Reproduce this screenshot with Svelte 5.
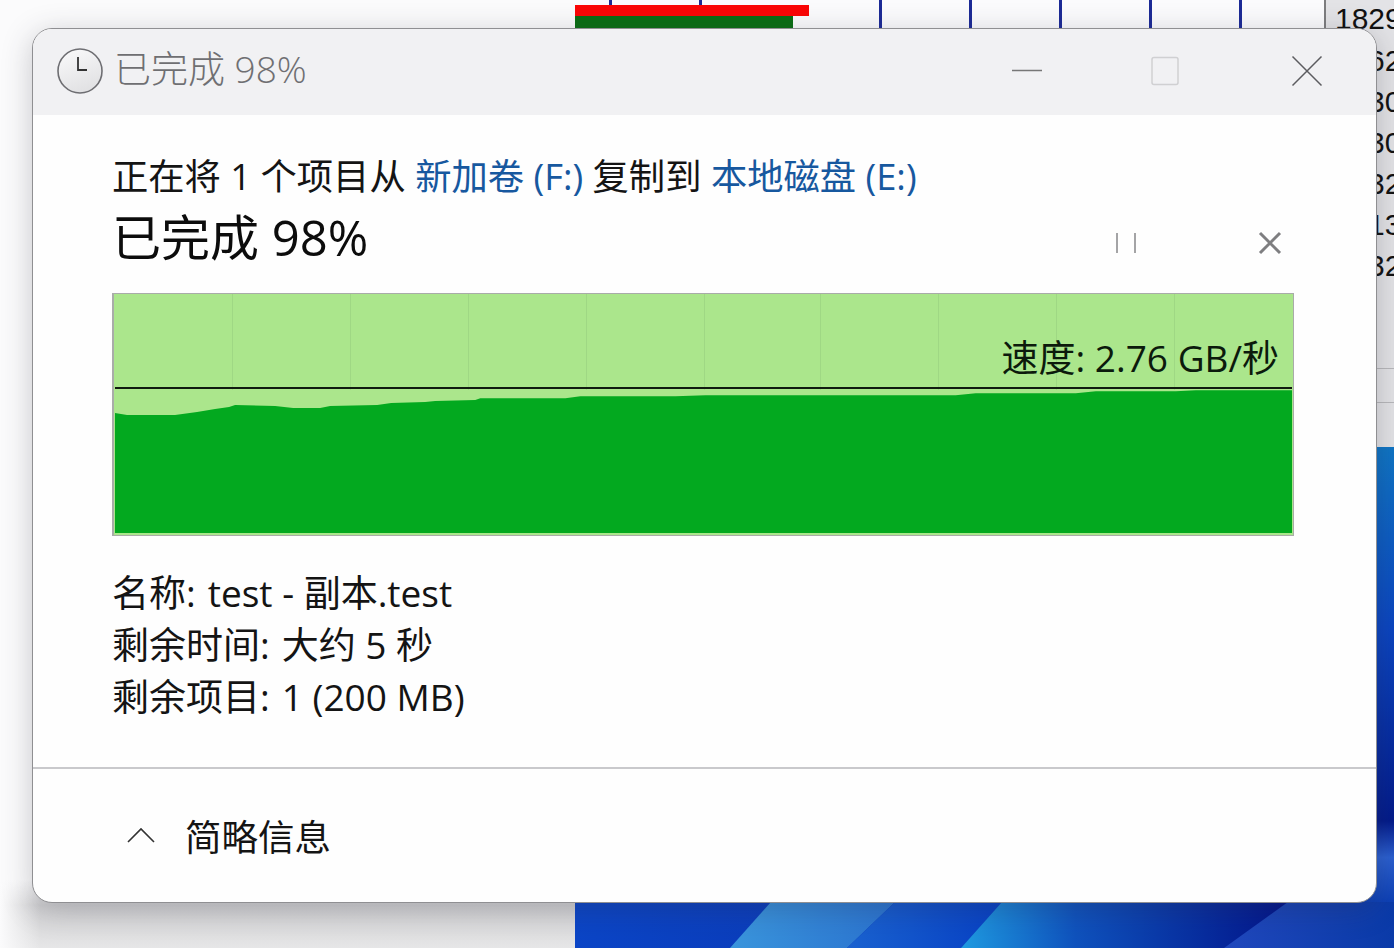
<script lang="ts">
	const gridLines = [233, 351, 469, 587, 705, 821, 939, 1057, 1175];
	const topTicks = [610, 700, 880, 970, 1060, 1150, 1240];
	const clippedCells = ['62', '30', '30', '32', '13', '32'];

	// sampled by eye from the graph, x / y are in the graph's own coordinates
	const curve = [
		[0, 119], [12, 121], [60, 121], [82, 118], [100, 115], [114, 113], [120, 111], [160, 112],
		[178, 114], [205, 114], [215, 112], [262, 111], [276, 109], [310, 108], [320, 107], [360, 106],
		[365, 104], [450, 104], [465, 102], [560, 102], [590, 101], [670, 101], [720, 101], [840, 101],
		[860, 99], [960, 99], [980, 97], [1060, 97], [1080, 96], [1176, 96]
	];
	const areaPath = 'M' + curve.map(([x, y]) => `${x} ${y}`).join('L') + 'L1176 240L0 240Z';
</script>

<div class="desktop">
	<div class="backdrop">
		<div class="sheet">
			{#each topTicks as x}
				<span class="tick" style={`left:${x - 576}px`}></span>
			{/each}
			<span class="bar bar--green"></span>
			<span class="bar bar--red"></span>
			<span class="sheet__rule"></span>
		</div>

		<div class="column">
			<span class="column__first">1829</span>
			<div class="column__cells">
				{#each clippedCells as cell}
					<span>{cell}</span>
				{/each}
			</div>
			<span class="column__rule column__rule--a"></span>
			<span class="column__rule column__rule--b"></span>
		</div>
		<div class="strip"></div>

		<svg class="wallpaper" viewBox="0 0 819 46" preserveAspectRatio="none" aria-hidden="true">
			<defs>
				<linearGradient id="wall-a" x1="0" x2="1" y1="0" y2="0">
					<stop offset="0" stop-color="#0b45c6" />
					<stop offset="0.5" stop-color="#0a34b0" />
					<stop offset="1" stop-color="#021488" />
				</linearGradient>
				<linearGradient id="wall-b" x1="0" x2="1" y1="0" y2="0">
					<stop offset="0" stop-color="#3a95dc" />
					<stop offset="1" stop-color="#2a72cf" />
				</linearGradient>
				<linearGradient id="wall-c" x1="0" x2="1" y1="0" y2="0">
					<stop offset="0" stop-color="#1a62d0" />
					<stop offset="1" stop-color="#0740c4" />
				</linearGradient>
				<linearGradient id="wall-d" x1="0" x2="1" y1="0" y2="0">
					<stop offset="0" stop-color="#1f9ae0" />
					<stop offset="0.35" stop-color="#0f52bd" />
					<stop offset="1" stop-color="#02148a" />
				</linearGradient>
				<linearGradient id="wall-e" x1="0" x2="1" y1="0" y2="0">
					<stop offset="0" stop-color="#2048bd" />
					<stop offset="1" stop-color="#0a3aa8" />
				</linearGradient>
			</defs>
			<rect width="819" height="46" fill="url(#wall-a)" />
			<path d="M155 46L196 0H320L272 46Z" fill="url(#wall-b)" />
			<path d="M272 46L320 0H427L386 46Z" fill="url(#wall-c)" />
			<path d="M386 46L427 0H713L649 46Z" fill="url(#wall-d)" />
			<path d="M649 46L713 0H819V46Z" fill="url(#wall-e)" />
		</svg>
	</div>

	<section class="dialog">
		<header class="titlebar">
			<div class="titlebar__left">
				<svg class="clock" width="48" height="48" viewBox="0 0 48 48" aria-hidden="true">
					<defs>
						<linearGradient id="clock-face" x1="0" x2="0.4" y1="0" y2="1">
							<stop offset="0" stop-color="#fbfbfc" />
							<stop offset="1" stop-color="#e2e2e4" />
						</linearGradient>
					</defs>
					<circle cx="24" cy="24" r="22" fill="url(#clock-face)" stroke="#6e6e72" stroke-width="1.6" />
					<path d="M22 10V23H31" fill="none" stroke="#333" stroke-width="1.8" />
				</svg>
				<span class="titlebar__text">已完成 98%</span>
			</div>
			<div class="winctl">
				<svg width="32" height="32" viewBox="0 0 32 32" aria-hidden="true"><path d="M1 15.5H31" stroke="#777" stroke-width="1.4" /></svg>
				<svg width="32" height="32" viewBox="0 0 32 32" aria-hidden="true"><rect x="3" y="2.5" width="26" height="27" rx="2" fill="none" stroke="#d0d0d2" stroke-width="1.5" /></svg>
				<svg class="winctl__close" width="32" height="32" viewBox="0 0 32 32" aria-hidden="true"><path d="M1.5 1.5L30.5 30.5M30.5 1.5L1.5 30.5" stroke="#5c5c5f" stroke-width="1.5" /></svg>
			</div>
		</header>

		<div class="body">
			<p class="route">正在将 1 个项目从 <span class="link">新加卷 (F:)</span> 复制到 <span class="link">本地磁盘 (E:)</span></p>
			<div class="status">
				<h1>已完成 98%</h1>
				<div class="actions">
					<svg width="22" height="22" viewBox="0 0 22 22" aria-hidden="true"><path d="M2 1V21M20 1V21" stroke="#a4a4a6" stroke-width="2" /></svg>
					<svg width="24" height="24" viewBox="0 0 24 24" aria-hidden="true"><path d="M2 2L22 22M22 2L2 22" stroke="#7e7e80" stroke-width="3" /></svg>
				</div>
			</div>

			<div class="graph">
				{#each gridLines as x}
					<span class="graph__grid" style={`left:${x - 115}px`}></span>
				{/each}
				<svg class="graph__area" viewBox="0 0 1176 240" preserveAspectRatio="none" aria-hidden="true">
					<path d={areaPath} fill="#03a91f" />
				</svg>
				<span class="graph__line"></span>
				<span class="graph__speed">速度: 2.76 GB/秒</span>
			</div>

			<ul class="details">
				<li><span class="details__label">名称:</span>test - 副本.test</li>
				<li><span class="details__label">剩余时间:</span>大约 5 秒</li>
				<li><span class="details__label">剩余项目:</span>1 (200 MB)</li>
			</ul>
		</div>

		<footer class="footer">
			<svg width="30" height="18" viewBox="0 0 30 18" aria-hidden="true"><path d="M2 16L15 3L28 16" fill="none" stroke="#333" stroke-width="1.6" /></svg>
			<span>简略信息</span>
		</footer>
	</section>
</div>

<style>
	:global(body) {
		margin: 0;
		background: #fff;
	}

	.desktop {
		position: relative;
		width: 1394px;
		height: 948px;
		overflow: hidden;
		padding: 28px 17px 45px 32px;
		box-sizing: border-box;
		font-family: "Open Sans", "Noto Sans CJK SC", sans-serif;
		color: #141414;
	}

	.backdrop {
		position: absolute;
		inset: 0;
		background:
			linear-gradient(90deg, #fbfbfc 0, rgba(251, 251, 252, 0) 40px),
			linear-gradient(180deg, #fbfbfc 880px, #d0d0d2 905px, #e6e6e7 948px);
	}

	.sheet {
		position: absolute;
		left: 575px;
		top: 0;
		width: 751px;
		height: 28px;
		background: #fbfbfd;
	}

	.tick {
		position: absolute;
		top: 0;
		bottom: 0;
		width: 3px;
		background: #1c2a96;
	}

	.bar {
		position: absolute;
		left: 0;
	}

	.bar--green {
		top: 16px;
		width: 218px;
		height: 12px;
		background: #0a6e14;
	}

	.bar--red {
		top: 5px;
		width: 234px;
		height: 11px;
		background: #fb0606;
	}

	.sheet__rule {
		position: absolute;
		right: 0;
		top: 0;
		bottom: 0;
		width: 2px;
		background: #7d7d7f;
	}

	.column {
		position: absolute;
		left: 1326px;
		top: 0;
		right: 0;
		height: 447px;
		overflow: hidden;
		background: #e3e3e6;
		font-family: "Liberation Sans", sans-serif;
		font-size: 30px;
		color: #111;
	}

	.column__first {
		position: absolute;
		left: 9px;
		top: 0;
		line-height: 37px;
	}

	.column__cells {
		position: absolute;
		left: 42px;
		top: 40px;
		display: flex;
		flex-direction: column;
		line-height: 41px;
	}

	.column__rule {
		position: absolute;
		left: 0;
		right: 0;
		height: 1px;
		background: #b8b8bb;
	}

	.column__rule--a {
		top: 368px;
	}

	.column__rule--b {
		top: 402px;
	}

	.strip {
		position: absolute;
		left: 1326px;
		top: 447px;
		right: 0;
		height: 456px;
		background: linear-gradient(180deg, #0e74c4 0, #0a44c0 40%, #021a8a 82%, #2a5fd0 90%, #0c3fb4 100%);
	}

	.wallpaper {
		position: absolute;
		left: 575px;
		top: 902px;
		width: 819px;
		height: 46px;
	}

	.dialog {
		position: relative;
		display: flex;
		flex-direction: column;
		height: 100%;
		box-sizing: border-box;
		border-radius: 20px;
		background: #fefefe;
		border: 1.5px solid #8f8f92;
		box-shadow: 0 6px 30px rgba(50, 50, 60, 0.26);
		overflow: hidden;
	}

	.titlebar {
		display: flex;
		align-items: center;
		justify-content: space-between;
		height: 86px;
		flex: none;
		box-sizing: border-box;
		padding: 0 53px 3px 23px;
		background: #f1f1f3;
	}

	.titlebar__left {
		display: flex;
		align-items: center;
		gap: 10px;
	}

	.titlebar__text {
		font-size: 37px;
		font-weight: 300;
		line-height: 48px;
		margin-top: -4px;
		color: #6f6f72;
	}

	.winctl {
		display: flex;
		align-items: center;
		gap: 106px;
	}

	.winctl__close {
		margin-left: 4px;
	}

	.body {
		flex: 1;
		padding: 39px 82px 0 79px;
		min-height: 0;
	}

	.route {
		margin: 0;
		font-size: 36.3px;
		line-height: 44px;
		white-space: nowrap;
	}

	.link {
		color: #17589f;
	}

	.status {
		display: flex;
		align-items: flex-start;
		justify-content: space-between;
		height: 88px;
		margin-top: 3px;
	}

	h1 {
		margin: 6px 0 0;
		font-size: 49px;
		font-weight: 400;
		line-height: 60px;
		color: #0c0c0c;
	}

	.actions {
		display: flex;
		align-items: center;
		gap: 121px;
		padding: 30px 12px 0 0;
	}

	.graph {
		position: relative;
		height: 243px;
		box-sizing: border-box;
		margin-top: 4px;
		border: 1px solid #a9aca9;
		border-width: 1px 1px 1px 2px;
		background: #abe68c;
	}

	.graph__grid {
		position: absolute;
		top: 0;
		height: 96px;
		width: 1px;
		background: #9fd884;
	}

	.graph__area {
		position: absolute;
		left: 1px;
		top: 1px;
		width: calc(100% - 2px);
		height: calc(100% - 3px);
	}

	.graph__line {
		position: absolute;
		left: 1px;
		right: 1px;
		top: 93px;
		height: 2px;
		background: #101a10;
	}

	.graph__speed {
		position: absolute;
		right: 14px;
		top: 40px;
		font-size: 37px;
		line-height: 48px;
		white-space: nowrap;
		color: #0c1a0c;
	}

	.details {
		list-style: none;
		margin: 31px 0 0;
		padding: 0;
		font-size: 37px;
		line-height: 52px;
		white-space: nowrap;
	}

	.details__label {
		margin-right: 12px;
	}

	.footer {
		display: flex;
		align-items: center;
		gap: 29px;
		height: 135px;
		flex: none;
		box-sizing: border-box;
		padding: 0 0 1px 93px;
		border-top: 2px solid #c9c9cc;
		font-size: 36.5px;
	}
</style>
